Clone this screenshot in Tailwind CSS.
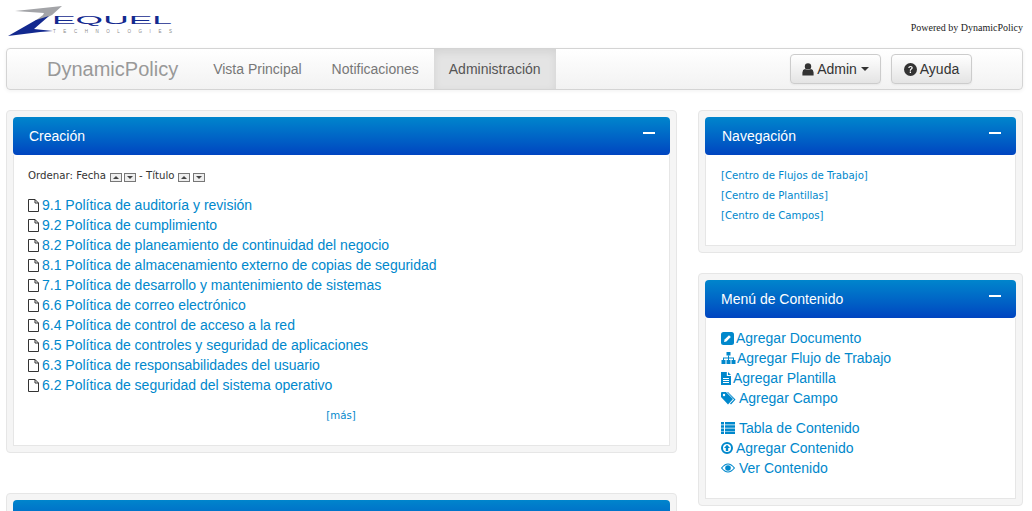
<!DOCTYPE html>
<html lang="es">
<head>
  <meta charset="UTF-8">
  <title>DynamicPolicy</title>
  <script src="https://cdn.jsdelivr.net/npm/@tailwindcss/browser@4"></script>
</head>
<body class="bg-white h-[511px] overflow-hidden font-['Liberation_Sans',Arial,sans-serif] text-[14px] text-[#333]">
  <div class="pl-[6px] pr-[9px]">

    <!-- top logo row -->
    <div class="h-[48px] flex justify-between">
      <svg width="180" height="40" viewBox="6 0 180 40">
        <polygon points="15,11 62,6 52,15 27,27 43,15 44,13" fill="#a3a4a8"/>
        <polygon points="8,36 36,20 49,16 34,29 53,31 40,32" fill="#13298f"/>
        <text x="52" y="24" font-family="'Liberation Sans',sans-serif" font-size="10" fill="#13298f" textLength="120" lengthAdjust="spacingAndGlyphs">EQUEL</text>
        <text x="53" y="32.5" font-family="'Liberation Sans',sans-serif" font-size="4.5" fill="#8a8a8a" textLength="119">TECHNOLOGIES</text>
      </svg>
      <div class="font-['Liberation_Serif',serif] text-[10px] text-[#222] mt-[22px] leading-[12px]">Powered by DynamicPolicy</div>
    </div>

    <!-- navbar -->
    <nav class="h-[42px] border border-[#d4d4d4] rounded-[4px] bg-gradient-to-b from-white to-[#f2f2f2] flex items-center shadow-[0_1px_4px_rgba(0,0,0,0.06)] overflow-hidden">
      <a class="text-[20px] text-[#999] ml-[40px] mr-[20px]">DynamicPolicy</a>
      <a class="px-[15px] text-[#777]">Vista Principal</a>
      <a class="px-[15px] text-[#777]">Notificaciones</a>
      <a class="px-[15px] h-full flex items-center text-[#555] bg-[#e4e4e4] shadow-[inset_0_3px_8px_rgba(0,0,0,0.08)]">Administración</a>
      <div class="ml-auto flex gap-[10px] mr-[50px]">
        <button class="h-[30px] w-[91px] flex items-center justify-center gap-[3px] border border-[#ccc] rounded-[4px] bg-gradient-to-b from-white to-[#e4e4e4] text-[#333] shadow-[0_1px_2px_rgba(0,0,0,0.05)]">
          <svg width="12" height="13" viewBox="0 0 12 13" fill="#333"><circle cx="6" cy="3.4" r="3.2"/><path d="M0.4 12.6 V9.4 Q0.6 6.4 3 6 Q6 8 9 6 Q11.4 6.4 11.6 9.4 V12.6 Z"/></svg>
          Admin
          <span class="ml-[1px] w-0 h-0 border-x-[4px] border-x-transparent border-t-[4px] border-t-[#333]"></span>
        </button>
        <button class="h-[30px] w-[81px] flex items-center justify-center gap-[3px] border border-[#ccc] rounded-[4px] bg-gradient-to-b from-white to-[#e4e4e4] text-[#333] shadow-[0_1px_2px_rgba(0,0,0,0.05)]">
          <svg width="13" height="13" viewBox="0 0 12 12"><circle cx="6" cy="6" r="6" fill="#333"/><path d="M3.9 4.6 Q4 2.7 6 2.7 Q8.1 2.7 8.1 4.4 Q8.1 5.4 7 6 Q6.4 6.3 6.4 7.1 H5.3 Q5.3 5.8 6.2 5.3 Q6.9 4.9 6.9 4.4 Q6.9 3.8 6 3.8 Q5.2 3.8 5.1 4.7 Z M5.3 7.8 H6.5 V9.2 H5.3 Z" fill="#fff"/></svg>
          Ayuda
        </button>
      </div>
    </nav>

    <div class="flex gap-[21px] mt-[20px] items-start">

      <!-- left column -->
      <div class="w-[671px] h-[401px] overflow-hidden shrink-0">
        <section class="h-[343px] p-[6px] border border-[#e6e6e6] rounded-[4px] bg-[#f5f5f5] flex flex-col">
          <div class="h-[38px] shrink-0 rounded-[4px] bg-gradient-to-b from-[#0085cc] to-[#0044c0] text-white flex items-center justify-between pl-[16px] pr-[15px]">
            <span>Creación</span>
            <span class="w-[12px] h-[2px] bg-white mb-[7px]"></span>
          </div>
          <div class="flex-1 bg-white border-x border-b border-[#e6e6e6] pl-[14px] pt-[14px]">
            <div class="font-['DejaVu_Sans',Verdana,sans-serif] text-[10.2px] leading-[14px] flex items-center text-[#333]">
              Ordenar: Fecha
              <span class="ml-[4px] w-[12px] h-[9px] mt-[2px] border border-[#777] bg-[#eee] flex items-center justify-center"><span class="w-0 h-0 border-x-[3px] border-x-transparent border-b-[3px] border-b-[#444]"></span></span>
              <span class="ml-[2px] w-[12px] h-[9px] mt-[2px] border border-[#777] bg-[#eee] flex items-center justify-center"><span class="w-0 h-0 border-x-[3px] border-x-transparent border-t-[3px] border-t-[#444]"></span></span>
              <span class="ml-[3px]">- Título</span>
              <span class="ml-[3px] w-[12px] h-[9px] mt-[2px] border border-[#777] bg-[#eee] flex items-center justify-center"><span class="w-0 h-0 border-x-[3px] border-x-transparent border-b-[3px] border-b-[#444]"></span></span>
              <span class="ml-[3px] w-[12px] h-[9px] mt-[2px] border border-[#777] bg-[#eee] flex items-center justify-center"><span class="w-0 h-0 border-x-[3px] border-x-transparent border-t-[3px] border-t-[#444]"></span></span>
            </div>
            <ul class="mt-[12px] leading-[20px] text-[#0088cc]">
              <li class="flex items-center gap-[3px]"><svg width="11" height="13" viewBox="0 0 11 13" fill="none" stroke="#333"><path d="M0.5 0.5 H7 L10.5 4 V12.5 H0.5 Z M7 0.5 V4 H10.5"/></svg>9.1 Política de auditoría y revisión</li>
              <li class="flex items-center gap-[3px]"><svg width="11" height="13" viewBox="0 0 11 13" fill="none" stroke="#333"><path d="M0.5 0.5 H7 L10.5 4 V12.5 H0.5 Z M7 0.5 V4 H10.5"/></svg>9.2 Política de cumplimiento</li>
              <li class="flex items-center gap-[3px]"><svg width="11" height="13" viewBox="0 0 11 13" fill="none" stroke="#333"><path d="M0.5 0.5 H7 L10.5 4 V12.5 H0.5 Z M7 0.5 V4 H10.5"/></svg>8.2 Política de planeamiento de continuidad del negocio</li>
              <li class="flex items-center gap-[3px]"><svg width="11" height="13" viewBox="0 0 11 13" fill="none" stroke="#333"><path d="M0.5 0.5 H7 L10.5 4 V12.5 H0.5 Z M7 0.5 V4 H10.5"/></svg>8.1 Política de almacenamiento externo de copias de seguridad</li>
              <li class="flex items-center gap-[3px]"><svg width="11" height="13" viewBox="0 0 11 13" fill="none" stroke="#333"><path d="M0.5 0.5 H7 L10.5 4 V12.5 H0.5 Z M7 0.5 V4 H10.5"/></svg>7.1 Política de desarrollo y mantenimiento de sistemas</li>
              <li class="flex items-center gap-[3px]"><svg width="11" height="13" viewBox="0 0 11 13" fill="none" stroke="#333"><path d="M0.5 0.5 H7 L10.5 4 V12.5 H0.5 Z M7 0.5 V4 H10.5"/></svg>6.6 Política de correo electrónico</li>
              <li class="flex items-center gap-[3px]"><svg width="11" height="13" viewBox="0 0 11 13" fill="none" stroke="#333"><path d="M0.5 0.5 H7 L10.5 4 V12.5 H0.5 Z M7 0.5 V4 H10.5"/></svg>6.4 Política de control de acceso a la red</li>
              <li class="flex items-center gap-[3px]"><svg width="11" height="13" viewBox="0 0 11 13" fill="none" stroke="#333"><path d="M0.5 0.5 H7 L10.5 4 V12.5 H0.5 Z M7 0.5 V4 H10.5"/></svg>6.5 Política de controles y seguridad de aplicaciones</li>
              <li class="flex items-center gap-[3px]"><svg width="11" height="13" viewBox="0 0 11 13" fill="none" stroke="#333"><path d="M0.5 0.5 H7 L10.5 4 V12.5 H0.5 Z M7 0.5 V4 H10.5"/></svg>6.3 Política de responsabilidades del usuario</li>
              <li class="flex items-center gap-[3px]"><svg width="11" height="13" viewBox="0 0 11 13" fill="none" stroke="#333"><path d="M0.5 0.5 H7 L10.5 4 V12.5 H0.5 Z M7 0.5 V4 H10.5"/></svg>6.2 Política de seguridad del sistema operativo</li>
            </ul>
            <div class="mt-[14px] text-center font-['DejaVu_Sans',Verdana,sans-serif] text-[10.2px] leading-[14px] text-[#0088cc] pr-[15px]">[más]</div>
          </div>
        </section>
        <section class="mt-[40px] h-[60px] p-[6px] border border-[#e6e6e6] rounded-[4px] bg-[#f5f5f5]">
          <div class="h-[38px] rounded-[4px] bg-gradient-to-b from-[#0085cc] to-[#0044c0]"></div>
        </section>
      </div>

      <!-- right column -->
      <div class="w-[325px] shrink-0">
        <section class="h-[143px] p-[6px] border border-[#e6e6e6] rounded-[4px] bg-[#f5f5f5] flex flex-col">
          <div class="h-[38px] shrink-0 rounded-[4px] bg-gradient-to-b from-[#0085cc] to-[#0044c0] text-white flex items-center justify-between pl-[17px] pr-[15px]">
            <span>Navegación</span>
            <span class="w-[12px] h-[2px] bg-white mb-[7px]"></span>
          </div>
          <div class="flex-1 bg-white border-x border-b border-[#e6e6e6] pl-[15px] pt-[11px] font-['DejaVu_Sans',Verdana,sans-serif] text-[10.2px] leading-[20px] text-[#0088cc]">
            <div>[Centro de Flujos de Trabajo]</div>
            <div>[Centro de Plantillas]</div>
            <div>[Centro de Campos]</div>
          </div>
        </section>
        <section class="mt-[20px] h-[233px] p-[6px] border border-[#e6e6e6] rounded-[4px] bg-[#f5f5f5] flex flex-col">
          <div class="h-[38px] shrink-0 rounded-[4px] bg-gradient-to-b from-[#0085cc] to-[#0044c0] text-white flex items-center justify-between pl-[16px] pr-[15px]">
            <span>Menú de Contenido</span>
            <span class="w-[12px] h-[2px] bg-white mb-[7px]"></span>
          </div>
          <div class="flex-1 bg-white border-x border-b border-[#e6e6e6] pl-[15px] pt-[10px] leading-[20px] text-[#0088cc]">
            <div class="flex items-center gap-[2px]">
              <svg width="13" height="13" viewBox="0 0 13 13"><rect width="13" height="13" rx="2.5" fill="#0088cc"/><path d="M3 10 L3.6 7.6 L8 3.2 L9.8 5 L5.4 9.4 Z" fill="#fff"/></svg>
              Agregar Documento</div>
            <div class="flex items-center gap-[1px]">
              <svg width="15" height="12" viewBox="0 0 14 12" fill="#0088cc"><rect x="5" y="0" width="4" height="3.5"/><rect x="0" y="8" width="4" height="4"/><rect x="5" y="8" width="4" height="4"/><rect x="10" y="8" width="4" height="4"/><path d="M6.5 3.5 H7.5 V5.5 H12.5 V8 H11.5 V6.5 H7.5 V8 H6.5 V6.5 H2.5 V8 H1.5 V5.5 H6.5 Z"/></svg>
              Agregar Flujo de Trabajo</div>
            <div class="flex items-center gap-[2px]">
              <svg width="10" height="13" viewBox="0 0 10 13" fill="#0088cc"><path d="M0 0 H5.8 V4 H10 V13 H0 Z M7 0 L10 3 H7 Z"/><path d="M2 6 H8 V7 H2 Z M2 8 H8 V9 H2 Z M2 10 H8 V11 H2 Z" fill="#fff"/></svg>
              Agregar Plantilla</div>
            <div class="flex items-center gap-[3px]">
              <svg width="15" height="13" viewBox="0 0 15 13" fill="#0088cc"><path d="M0 1 Q0 0 1 0 H5 L12 7 L7 12.5 L0 5 Z"/><path d="M7 0 L14.5 7.5 L10 12.5 L9 11.5 L13 7.5 L6 0 Z"/><circle cx="3" cy="3" r="1.2" fill="#fff"/></svg>
              Agregar Campo</div>
            <div class="flex items-center gap-[4px] mt-[10px]">
              <svg width="14" height="12" viewBox="0 0 14 12" fill="#0088cc"><path d="M0 0 H3 V2.5 H0 Z M4 0 H14 V2.5 H4 Z M0 3.2 H3 V5.7 H0 Z M4 3.2 H14 V5.7 H4 Z M0 6.4 H3 V8.9 H0 Z M4 6.4 H14 V8.9 H4 Z M0 9.5 H3 V12 H0 Z M4 9.5 H14 V12 H4 Z"/></svg>
              Tabla de Contenido</div>
            <div class="flex items-center gap-[3px]">
              <svg width="12" height="12" viewBox="0 0 12 12"><circle cx="6" cy="6" r="5" fill="none" stroke="#0088cc" stroke-width="2"/><path d="M6 2.8 L9 6 H7.2 V9 H4.8 V6 H3 Z" fill="#0088cc"/></svg>
              Agregar Contenido</div>
            <div class="flex items-center gap-[4px]">
              <svg width="14" height="10" viewBox="0 0 14 10"><path d="M0.6 5 Q7 -3 13.4 5 Q7 13 0.6 5 Z" fill="none" stroke="#0088cc" stroke-width="1.2"/><circle cx="7" cy="5" r="2.8" fill="#0088cc"/></svg>
              Ver Contenido</div>
          </div>
        </section>
      </div>
    </div>
  </div>
</body>
</html>
